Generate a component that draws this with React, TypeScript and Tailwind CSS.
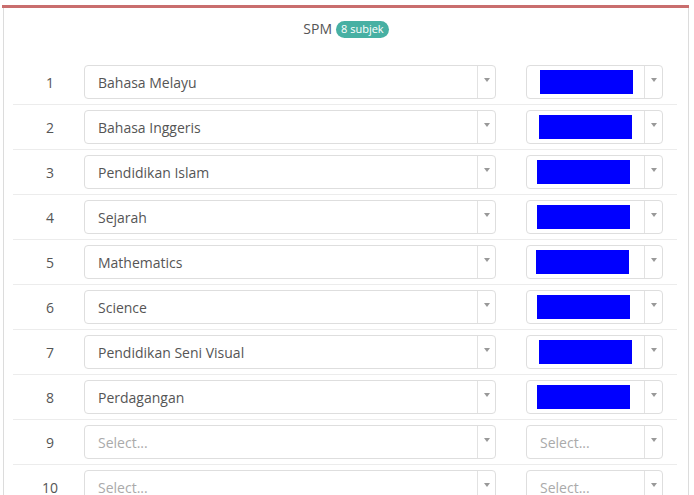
const subjects = [
  'Bahasa Melayu',
  'Bahasa Inggeris',
  'Pendidikan Islam',
  'Sejarah',
  'Mathematics',
  'Science',
  'Pendidikan Seni Visual',
  'Perdagangan',
]

// left offset of the redaction box inside the grade select, per row
const redactOffsets = [
  'ml-[13px]',
  'ml-[12px]',
  'ml-[10px]',
  'ml-[10px]',
  'ml-[9px]',
  'ml-[10px]',
  'ml-[12px]',
  'ml-[10px]',
]

function Caret() {
  return (
    <span className="flex w-[18px] shrink-0 justify-center border-l border-[#e2e2e2] pt-[12px]">
      <span className="h-0 w-0 border-x-[3px] border-t-[4px] border-x-transparent border-t-[#999]" />
    </span>
  )
}

function SelectBox({
  value,
  className,
}: {
  value?: string
  className: string
}) {
  return (
    <div
      className={`flex h-[34px] rounded-[4px] border border-[#dedede] bg-white ${className}`}
    >
      <span
        className={`flex min-w-0 flex-1 items-center truncate pl-[13px] text-[14px] ${
          value ? 'text-[#555]' : 'text-[#aaa]'
        }`}
      >
        {value ?? 'Select...'}
      </span>
      <Caret />
    </div>
  )
}

function GradeBox({ row }: { row: number }) {
  const filled = row < subjects.length
  if (!filled) return <SelectBox className="w-[137px]" />
  return (
    <div className="flex h-[34px] w-[137px] rounded-[4px] border border-[#dedede] bg-white">
      <span className="flex flex-1 items-center">
        <span className={`h-[24px] w-[93px] bg-[#0000ff] ${redactOffsets[row]}`} />
      </span>
      <Caret />
    </div>
  )
}

export default function App() {
  const rows = Array.from({ length: 10 }, (_, i) => i)
  return (
    <div
      className="h-[495px] w-[694px] overflow-hidden bg-white pt-[5px] text-[#555]"
      style={{ fontFamily: '"Open Sans", "Noto Sans", sans-serif' }}
    >
      <div className="ml-[2px] w-[687px] border-t-[3px] border-[#c96e6e]">
        <div className="ml-[1px] w-[686px] border-x border-[#dcdcdc] px-[9px] pb-10">
          <div className="flex items-center justify-center gap-[4px] pt-[11px] pb-[21px]">
            <span className="text-[14px] leading-5 text-[#555]">SPM</span>
            <span className="flex h-[17px] items-center rounded-full bg-[#47b0a3] px-[5px] text-[11px] text-white">
              8 subjek
            </span>
          </div>

          <div className="w-[664px]">
            {rows.map((i) => (
              <div
                key={i}
                className="flex items-center border-b border-[#ececec] pt-[5px] pb-[5px]"
              >
                <span className="w-[71px] pl-[3px] text-center text-[14px] text-[#555]">
                  {i + 1}
                </span>
                <SelectBox value={subjects[i]} className="w-[412px]" />
                <span className="w-[30px]" />
                <GradeBox row={i} />
              </div>
            ))}
          </div>
        </div>
      </div>
    </div>
  )
}
